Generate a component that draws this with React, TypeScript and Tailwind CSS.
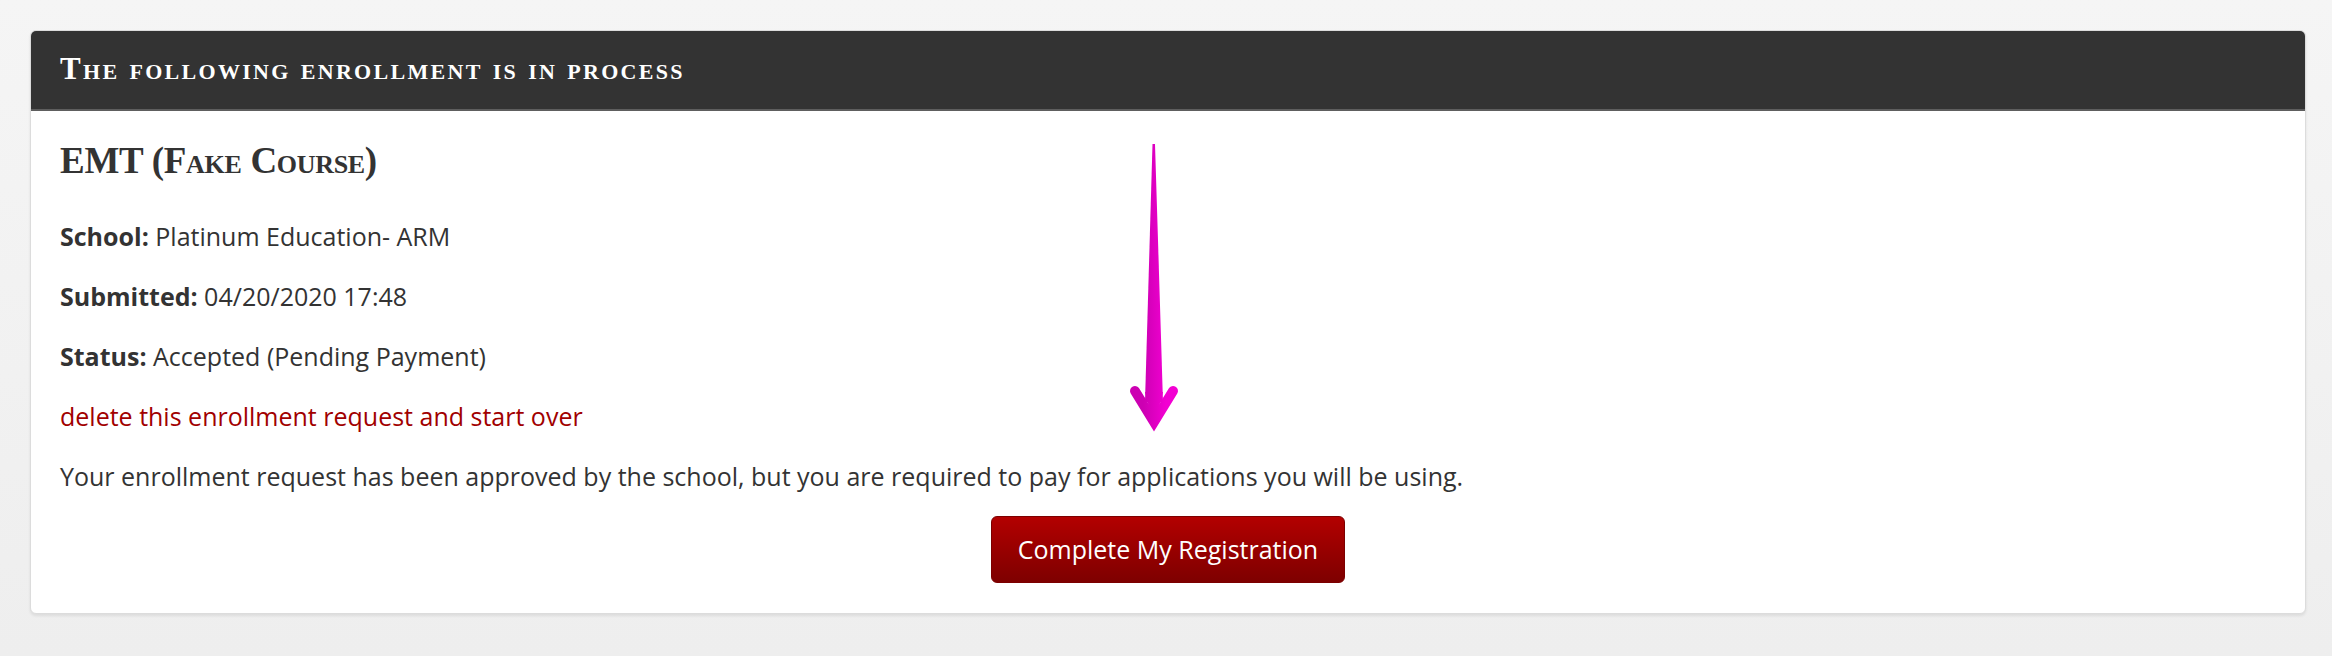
export default function App() {
  return (
    <div className="min-h-screen bg-gradient-to-b from-[#f5f5f5] to-[#eeeeee] pt-[30px] pb-[41px] pl-[30px] pr-[26px] font-['Open_Sans','Noto_Sans',sans-serif] text-[25px] text-[#333333]">
      <div className="overflow-hidden rounded-[6px] border border-[#dcdcdc] bg-white shadow-[0_2px_3px_rgba(0,0,0,0.08)]">
        <div className="flex h-[80px] items-center border-b-2 border-[#5e5e5e] bg-[#333333] px-[29px] pb-[2px]">
          <h2 className="font-['Liberation_Serif',serif] text-[31px] font-bold tracking-[2.3px] text-white [font-variant:small-caps]">
            The following enrollment is in process
          </h2>
        </div>

        <div className="relative px-[29px] pt-[26px] pb-[30px]">
          <h3 className="font-['Liberation_Serif',serif] text-[37px] leading-[48px] font-bold tracking-[-0.3px] text-[#333333] [font-variant:small-caps]">
            EMT (Fake Course)
          </h3>

          <p className="mt-[36px] leading-[30px]">
            <strong className="font-bold">School:</strong> Platinum Education- ARM
          </p>
          <p className="mt-[30px] leading-[30px]">
            <strong className="font-bold">Submitted:</strong> 04/20/2020 17:48
          </p>
          <p className="mt-[30px] leading-[30px]">
            <strong className="font-bold">Status:</strong> Accepted (Pending Payment)
          </p>
          <p className="mt-[30px] leading-[30px]">
            <a href="#" className="text-[#a10000]">
              delete this enrollment request and start over
            </a>
          </p>
          <p className="mt-[30px] leading-[30px]">
            Your enrollment request has been approved by the school, but you are required to pay for applications you will be using.
          </p>

          <div className="mt-[25px] flex justify-center">
            <button className="flex h-[67px] w-[354px] items-center justify-center rounded-[6px] border border-[#7c0000] bg-gradient-to-b from-[#b30000] to-[#7e0000] text-[25px] text-white">
              Complete My Registration
            </button>
          </div>

          <svg
            className="pointer-events-none absolute left-[1095px] top-[29px]"
            width="56"
            height="296"
            viewBox="0 0 56 296"
          >
            <defs>
              <linearGradient id="arrowFill" x1="17" y1="0" x2="40" y2="0" gradientUnits="userSpaceOnUse">
                <stop offset="0" stopColor="#cc00b2" />
                <stop offset="1" stopColor="#f200d2" />
              </linearGradient>
            </defs>
            <polygon points="26.5,4 29,4 37,262 19,262" fill="url(#arrowFill)" />
            <polygon points="19,252 37,252 28,286" fill="url(#arrowFill)" />
            <path
              d="M9 251 L28 282 L47 251"
              fill="none"
              stroke="url(#arrowFill)"
              strokeWidth="10"
              strokeLinecap="round"
              strokeLinejoin="miter"
            />
          </svg>
        </div>
      </div>
    </div>
  );
}
